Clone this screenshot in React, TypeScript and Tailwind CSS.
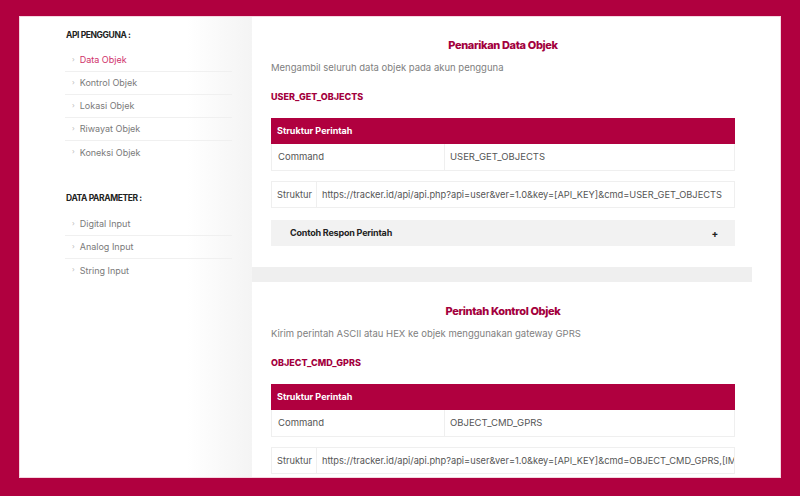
const font = "font-['Inter','Noto_Sans',sans-serif]"

const userMenu = ['Data Objek', 'Kontrol Objek', 'Lokasi Objek', 'Riwayat Objek', 'Koneksi Objek']
const paramMenu = ['Digital Input', 'Analog Input', 'String Input']

function MenuList({ items, active }: { items: string[]; active?: string }) {
  return (
    <ul className="w-[167px] -ml-px">
      {items.map((item, i) => (
        <li
          key={item}
          className={`flex items-center h-[23px] pl-[7px] text-[9px] ${i < items.length - 1 ? 'border-b border-[#f0f0f0]' : ''} ${item === active ? 'text-[#d0316a]' : 'text-[#7a7a7a]'}`}
        >
          <span className="text-[7px] text-[#bbb] mr-[5px]">›</span>
          {item}
        </li>
      ))}
    </ul>
  )
}

function CommandCard({
  title,
  desc,
  code,
  url,
  accordion,
}: {
  title: string
  desc: string
  code: string
  url: string
  accordion?: boolean
}) {
  return (
    <div className={`bg-white pl-[19px] pr-[17px] pt-[21px] ${accordion ? 'pb-[21px]' : 'pb-[19px]'}`}>
      <h2 className="text-center text-[11px] leading-[16px] font-extrabold tracking-[-0.35px] text-[#a3003d]">{title}</h2>
      <p className="mt-[8px] text-[9.5px] leading-[14px] text-[#808080]">{desc}</p>
      <p className="mt-[15px] text-[9px] leading-[14px] font-extrabold text-[#a3003d]">{code}</p>
      <div className="mt-[14px] h-[26px] bg-[#b0003f] flex items-center px-[6px] text-[9px] font-bold text-white">
        Struktur Perintah
      </div>
      <div className="flex h-[27px] border border-t-0 border-[#efefef] text-[9.5px] text-[#555]">
        <div className="w-[173px] flex items-center px-[6px] border-r border-[#efefef]">Command</div>
        <div className="flex items-center px-[5px]">{code}</div>
      </div>
      <div className="mt-[10px] flex h-[27px] border border-[#efefef] text-[9.25px] text-[#555]">
        <div className="w-[45px] shrink-0 flex items-center px-[5px] border-r border-[#efefef]">Struktur</div>
        <div className="min-w-0 flex items-center px-[5px] whitespace-nowrap overflow-hidden">{url}</div>
      </div>
      {accordion && (
        <div className="mt-[12px] h-[26px] bg-[#f2f2f2] flex items-center justify-between pl-[19px] pr-[17px] text-[9px] font-bold tracking-[-0.2px] text-[#222]">
          <span>Contoh Respon Perintah</span>
          <span className="text-[10px]">+</span>
        </div>
      )}
    </div>
  )
}

export default function App() {
  return (
    <div className={`${font} w-[800px] h-[496px] bg-[#b0003f] pt-4 px-[19px] pb-[18px]`}>
      <div className="h-full bg-white overflow-hidden flex border border-[#f5d6e0]">
        <aside className="w-[232px] shrink-0 pl-[46px] pt-[11px] bg-[linear-gradient(to_right,#ffffff_72%,#f4f4f4)]">
          <h3 className="text-[8.5px] leading-[14px] font-bold tracking-[-0.4px] text-[#222]">API PENGGUNA :</h3>
          <div className="mt-[7px]">
            <MenuList items={userMenu} active="Data Objek" />
          </div>
          <h3 className="mt-[27px] text-[8.5px] leading-[14px] font-bold tracking-[-0.4px] text-[#222]">DATA PARAMETER :</h3>
          <div className="mt-[8px]">
            <MenuList items={paramMenu} />
          </div>
        </aside>
        <main className="w-[500px] shrink-0 bg-[#efefef] flex flex-col gap-[15px] -mt-px">
          <CommandCard
            title="Penarikan Data Objek"
            desc="Mengambil seluruh data objek pada akun pengguna"
            code="USER_GET_OBJECTS"
            url="https://tracker.id/api/api.php?api=user&ver=1.0&key=[API_KEY]&cmd=USER_GET_OBJECTS"
            accordion
          />
          <CommandCard
            title="Perintah Kontrol Objek"
            desc="Kirim perintah ASCII atau HEX ke objek menggunakan gateway GPRS"
            code="OBJECT_CMD_GPRS"
            url="https://tracker.id/api/api.php?api=user&ver=1.0&key=[API_KEY]&cmd=OBJECT_CMD_GPRS,[IMEI],[TYPE],[CMD]"
          />
        </main>
      </div>
    </div>
  )
}
